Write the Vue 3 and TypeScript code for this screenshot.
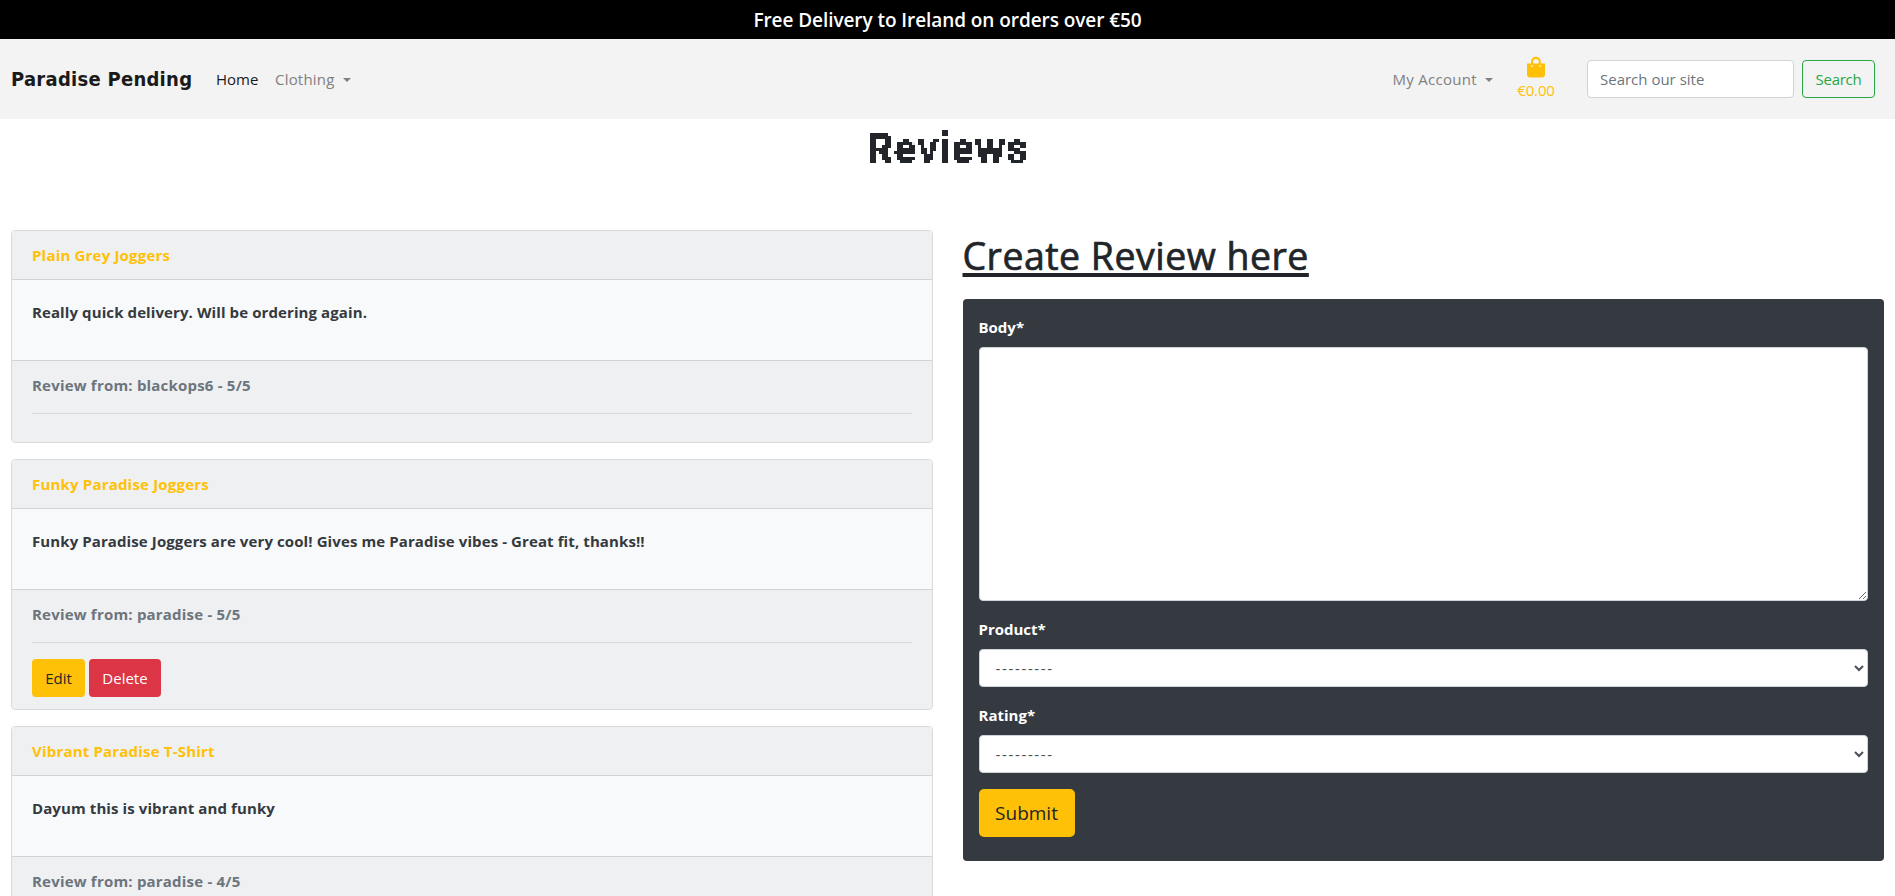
<script setup lang="ts">
import { ref } from 'vue'

interface Review {
  product: string
  body: string
  author: string
  rating: number
  own: boolean
}

const reviews: Review[] = [
  { product: 'Plain Grey Joggers', body: 'Really quick delivery. Will be ordering again.', author: 'blackops6', rating: 5, own: false },
  { product: 'Funky Paradise Joggers', body: 'Funky Paradise Joggers are very cool! Gives me Paradise vibes - Great fit, thanks!!', author: 'paradise', rating: 5, own: true },
  { product: 'Vibrant Paradise T-Shirt', body: 'Dayum this is vibrant and funky', author: 'paradise', rating: 4, own: false },
]

const query = ref('')
const body = ref('')
const product = ref('')
const rating = ref('')
</script>

<template>
  <div class="page">
    <svg class="defs" width="0" height="0" aria-hidden="true">
      <filter id="pixel-3" x="0" y="0" width="100%" height="100%">
        <feFlood x="1" y="1" width="1" height="1" flood-color="#000" />
        <feComposite width="3" height="3" />
        <feTile result="grid" />
        <feComponentTransfer in="SourceGraphic" result="solid"><feFuncA type="linear" slope="20" intercept="-9" /></feComponentTransfer>
        <feComposite in="solid" in2="grid" operator="in" />
        <feMorphology operator="dilate" radius="1" />
      </filter>
    </svg>

    <div class="banner">Free Delivery to Ireland on orders over €50</div>

    <nav class="navbar">
      <a class="brand">Paradise Pending</a>
      <a class="link home">Home</a>
      <a class="link clothing">Clothing<i class="caret"></i></a>
      <a class="link account">My Account<i class="caret"></i></a>
      <a class="bag">
        <svg width="20" height="22" viewBox="0 0 20 22">
          <path d="M6 8.4V5.8a3.9 3.9 0 0 1 7.8 0V8.4" fill="none" stroke="#ffc107" stroke-width="2.1" />
          <path d="M1 7.6h18v11a3 3 0 0 1-3 3H4a3 3 0 0 1-3-3z" fill="#ffc107" />
          <circle cx="6" cy="10" r=".9" fill="#f3f3f3" />
          <circle cx="13.8" cy="10" r=".9" fill="#f3f3f3" />
        </svg>
        <span>€0.00</span>
      </a>
      <form class="search" @submit.prevent>
        <input v-model="query" class="control" placeholder="Search our site" />
        <button class="btn outline">Search</button>
      </form>
    </nav>

    <h1 class="title">Reviews</h1>

    <main class="columns">
      <section>
        <article v-for="r in reviews" :key="r.product" class="card">
          <header>{{ r.product }}</header>
          <div class="card-body"><p>{{ r.body }}</p></div>
          <footer>
            <div class="from">Review from: {{ r.author }} - {{ r.rating }}/5</div>
            <hr />
            <div v-if="r.own" class="actions">
              <button class="btn edit">Edit</button>
              <button class="btn delete">Delete</button>
            </div>
          </footer>
        </article>
      </section>

      <section>
        <h1 class="create"><span>Create Review here</span></h1>
        <form class="form" @submit.prevent>
          <label for="body">Body*</label>
          <textarea id="body" v-model="body" class="control area"></textarea>
          <label for="product">Product*</label>
          <select id="product" v-model="product" class="control">
            <option value="">---------</option>
          </select>
          <label for="rating">Rating*</label>
          <select id="rating" v-model="rating" class="control">
            <option value="">---------</option>
          </select>
          <button class="btn submit">Submit</button>
        </form>
      </section>
    </main>
  </div>
</template>

<style>
html,
body {
  margin: 0;
  overflow: hidden;
  background: #fff;
}
</style>

<style scoped>
* {
  box-sizing: border-box;
}
.page {
  height: 896px;
  overflow: hidden;
  font: 15px/24px "Open Sans", "Noto Sans", sans-serif;
  color: #212529;
}
.defs {
  display: block;
}
.banner {
  height: 39px;
  background: #000;
  color: #fff;
  font-size: 19px;
  font-weight: 600;
  line-height: 40px;
  letter-spacing: -0.07px;
  text-align: center;
}
.navbar {
  display: flex;
  align-items: center;
  height: 80px;
  padding: 0 20px 0 11px;
  background: #f3f3f3;
}
.brand {
  width: 205px;
  font: bold 20px/30px "DejaVu Sans Condensed", "DejaVu Sans", sans-serif;
  font-stretch: condensed;
  letter-spacing: 0.27px;
  color: #1a1a1a;
  white-space: nowrap;
}
.link {
  color: #808080;
  white-space: nowrap;
}
.home {
  width: 59px;
  color: #1a1a1a;
}
.clothing {
  letter-spacing: 0.2px;
}
.account {
  margin-left: auto;
  letter-spacing: 0.3px;
}
.caret {
  display: inline-block;
  margin-left: 8px;
  vertical-align: 3px;
  border: 4.5px solid transparent;
  border-top-color: currentColor;
  border-bottom: 0;
}
.bag {
  display: flex;
  flex-direction: column;
  align-items: center;
  width: 38px;
  margin: 0 32px 0 24px;
  color: #ffc107;
  letter-spacing: -0.15px;
}
.bag svg {
  display: block;
}
.search {
  display: flex;
  gap: 8px;
}
.search .control {
  width: 207px;
}
.control {
  display: block;
  width: 100%;
  height: 38px;
  padding: 6px 12px;
  border: 1px solid #ced4da;
  border-radius: 4px;
  background: #fff;
  color: #495057;
  font: inherit;
  outline: 0;
}
.control::placeholder {
  color: #6c757d;
}
.btn {
  height: 38px;
  padding: 0 12px;
  border: 1px solid transparent;
  border-radius: 4px;
  background: transparent;
  font: inherit;
  color: #212529;
}
.outline {
  width: 73px;
  border-color: #28a745;
  color: #28a745;
  letter-spacing: -0.25px;
}
.title {
  width: 168px;
  height: 48px;
  margin: 8px auto 55px;
  font: bold 42px/44px Roboto, sans-serif;
  letter-spacing: 0.8px;
  text-align: center;
  white-space: nowrap;
  filter: url(#pixel-3);
}
.columns {
  display: grid;
  grid-template-columns: 1fr 1fr;
  gap: 30px;
  padding: 0 11px;
}
.card {
  margin-bottom: 16px;
  border: 1px solid #d8dadc;
  border-radius: 4px;
  background: #f8f9fb;
  overflow: hidden;
  font-weight: 700;
}
.card header {
  padding: 12px 20px;
  border-bottom: 1px solid #d1d3d5;
  background: #eff0f2;
  color: #ffc107;
  letter-spacing: 0.19px;
}
.card-body {
  padding: 20px;
  color: #343a40;
  letter-spacing: 0.1px;
}
.card-body p {
  margin: 0 0 16px;
}
.card footer {
  padding: 12px 20px;
  border-top: 1px solid #d1d3d5;
  background: #eff0f2;
  color: #6c757d;
  letter-spacing: 0.2px;
}
.card hr {
  margin: 16px 0;
  border: 0;
  border-top: 1px solid #d7d8da;
}
.actions {
  display: flex;
  gap: 4px;
  font-weight: 400;
  letter-spacing: 0;
}
.edit {
  width: 53px;
  background: #ffc107;
}
.delete {
  width: 72px;
  background: #dc3545;
  color: #fff;
}
.create {
  height: 69px;
  margin: 0;
  font-size: 37.5px;
  font-weight: 500;
  line-height: 52px;
  letter-spacing: 0.48px;
  -webkit-text-stroke: 0.7px #212529;
}
.create span {
  text-decoration: underline;
  text-decoration-thickness: 3.5px;
  text-underline-offset: 3px;
  text-decoration-skip-ink: none;
}
.form {
  height: 562px;
  padding: 16px;
  border-radius: 4px;
  background: #343a40;
}
.form label {
  display: block;
  margin-bottom: 8px;
  color: #fff;
  font-weight: 700;
}
.form .control {
  margin-bottom: 16px;
}
.form .area {
  height: 254px;
}
.form select {
  letter-spacing: 1.65px;
}
.submit {
  width: 96px;
  height: 48px;
  border-radius: 5px;
  background: #ffc107;
  font-size: 19px;
}
</style>
